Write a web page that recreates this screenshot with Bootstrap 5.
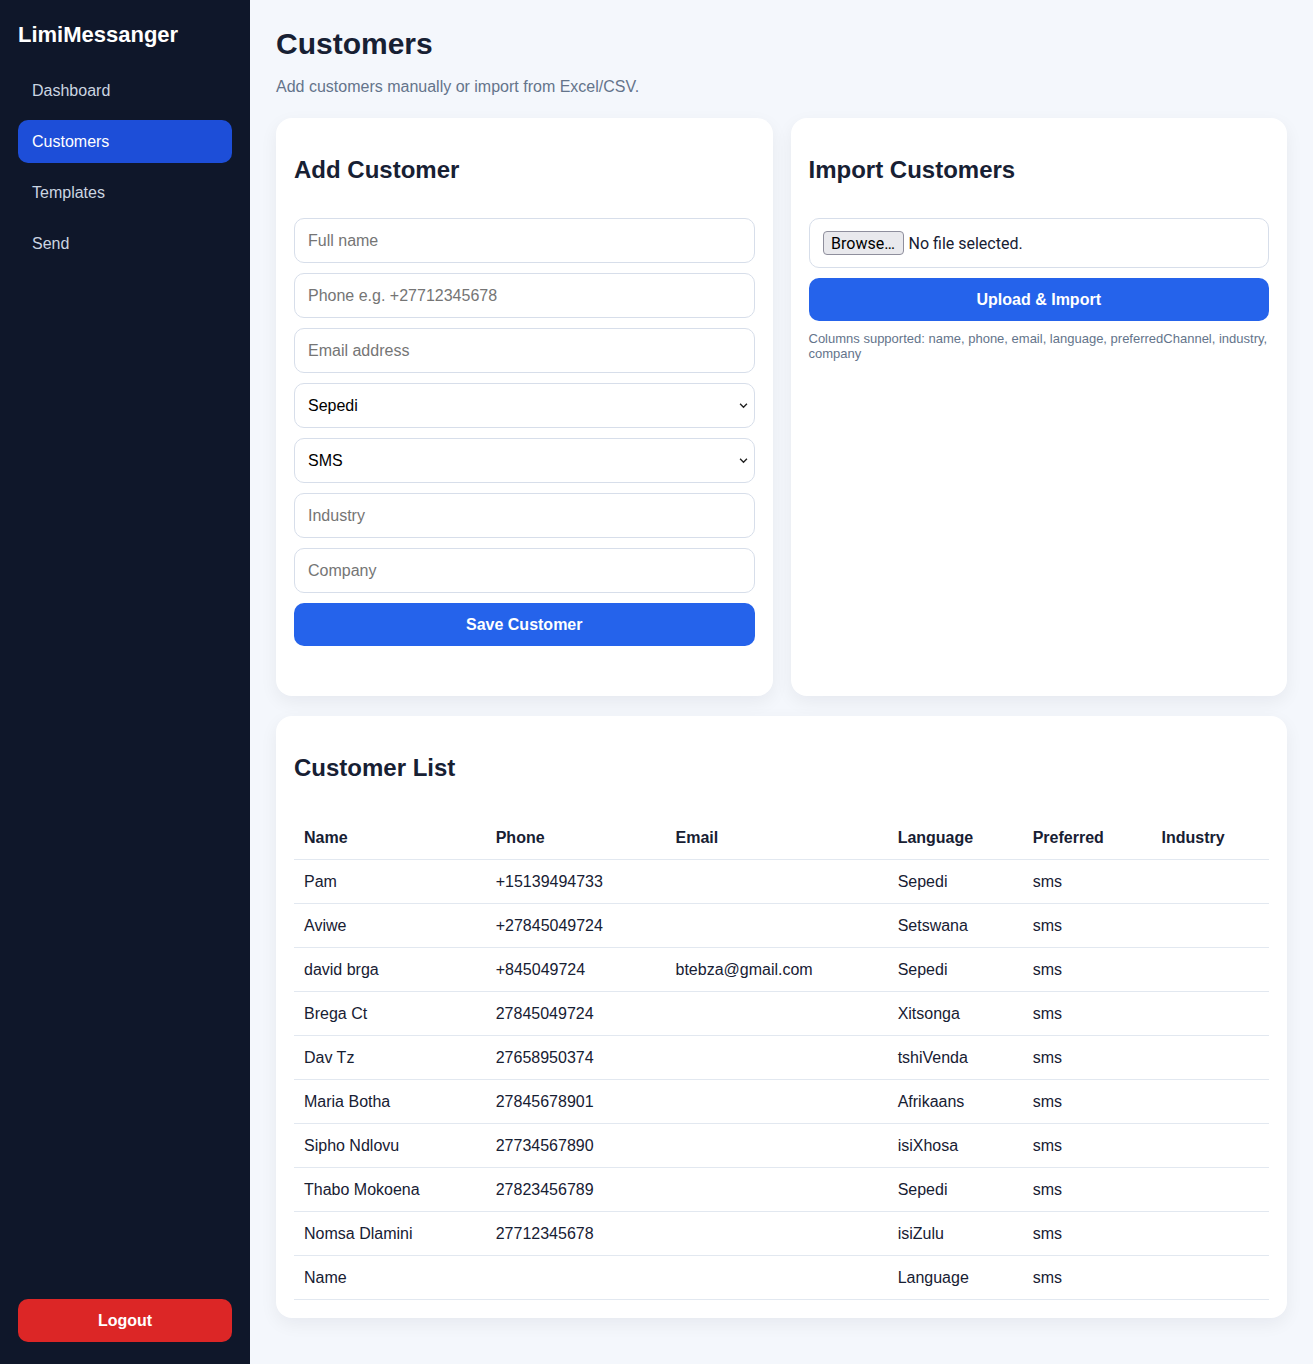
<!DOCTYPE html>
<html lang="en">
<head>
    <meta charset="UTF-8">
    <title>Customers - LimiMessanger</title>
    <link href="https://cdn.jsdelivr.net/npm/bootstrap@5.3.3/dist/css/bootstrap.min.css" rel="stylesheet">
    <style>
        body { background: #f4f7fc; color: #172033; font-family: "Liberation Sans", Arial, sans-serif; font-size: 16px; }
        .sidebar { width: 250px; flex: 0 0 250px; background: #0f172a; padding: 18px 18px 22px; min-height: 1364px; }
        .brand { color: #fff; font-size: 22px; font-weight: 700; line-height: 34px; margin-bottom: 17px; }
        .sidebar .nav { gap: 8px; }
        .sidebar .nav-link { color: #cbd5e1; padding: 0 14px; line-height: 43px; border-radius: 10px; }
        .sidebar .nav-link.active { background: #1d4ed8; color: #fff; }
        .btn-logout { background: #dc2626; color: #fff; font-weight: 700; height: 43px; padding: 0 12px; border: 0; border-radius: 10px; }
        .main { padding: 26px 26px 46px; min-width: 0; }
        .page-title { font-size: 30px; font-weight: 700; line-height: 36px; margin: 0 0 13px; color: #172033; }
        .page-sub { color: #64748b; line-height: 24px; margin-bottom: 19px; }
        .cards { --bs-gutter-x: 18px; --bs-gutter-y: 0; }
        .panel { background: #fff; border: 0; border-radius: 16px; padding: 18px; box-shadow: 0 6px 18px rgba(15, 23, 42, .06); }
        .panel-form { padding-bottom: 50px; }
        .panel-title { font-size: 24px; font-weight: 700; line-height: 28px; margin: 20px 0 34px; color: #172033; }
        .stack { gap: 10px; }
        .field { height: 45px; padding: 0 13px; border: 1px solid #d7deea; border-radius: 10px; font-size: 16px; color: #000; }
        .field::placeholder { color: #757575; }
        select.form-select.field {
            background-image: url("data:image/svg+xml,%3csvg xmlns='http://www.w3.org/2000/svg' viewBox='0 0 10 7'%3e%3cpath fill='none' stroke='%23222' stroke-width='1.6' d='M1 1l4 4 4-4'/%3e%3c/svg%3e");
            background-position: right 6px center;
            background-size: 9px 6px;
        }
        .file-field { height: 50px; padding: 0 13px; gap: 5px; border: 1px solid #d7deea; border-radius: 10px; background: #fff; font-family: Roboto, sans-serif; font-size: 16px; color: #172033; }
        .file-field span { padding-top: 2px; }
        .file-btn { height: 24px; line-height: 24px; margin: 0; width: 81px; text-align: center; background: #e9e9ed; border: 1px solid #8f8f9d; border-radius: 4px; color: #000; white-space: nowrap; }
        .btn-save { background: #2563eb; color: #fff; font-weight: 700; height: 43px; padding: 1px 12px 0; border: 0; border-radius: 10px; }
        .hint { color: #64748b; font-size: 13px; line-height: 15px; margin-top: 10px; }
        .list-panel { margin-top: 20px; }
        .list-panel .panel-title { margin-bottom: 33px; }
        .table { margin: 0; --bs-table-color: #172033; --bs-table-border-color: #e2e8f0; }
        .table th, .table td { padding: 2px 10px 0; height: 44px; vertical-align: middle; color: #172033; }
    </style>
</head>
<body>
    <div class="d-flex">
        <aside class="sidebar d-flex flex-column">
            <div class="brand">LimiMessanger</div>
            <nav class="nav flex-column">
                <a class="nav-link" href="#">Dashboard</a>
                <a class="nav-link active" href="#">Customers</a>
                <a class="nav-link" href="#">Templates</a>
                <a class="nav-link" href="#">Send</a>
            </nav>
            <button type="button" class="btn btn-logout w-100 mt-auto">Logout</button>
        </aside>

        <main class="main flex-grow-1">
            <h1 class="page-title">Customers</h1>
            <p class="page-sub">Add customers manually or import from Excel/CSV.</p>

            <div class="row cards">
                <div class="col-6">
                    <div class="panel panel-form h-100">
                        <h2 class="panel-title">Add Customer</h2>
                        <form class="d-grid stack">
                            <input type="text" class="form-control field" placeholder="Full name">
                            <input type="text" class="form-control field" placeholder="Phone e.g. +27712345678">
                            <input type="email" class="form-control field" placeholder="Email address">
                            <select class="form-select field"><option>Sepedi</option></select>
                            <select class="form-select field"><option>SMS</option></select>
                            <input type="text" class="form-control field" placeholder="Industry">
                            <input type="text" class="form-control field" placeholder="Company">
                            <button type="button" class="btn btn-save w-100">Save Customer</button>
                        </form>
                    </div>
                </div>
                <div class="col-6">
                    <div class="panel h-100">
                        <h2 class="panel-title">Import Customers</h2>
                        <form class="d-grid stack">
                            <div class="file-field d-flex align-items-center">
                                <input type="file" id="customerFile" class="d-none">
                                <label for="customerFile" class="file-btn">Browse…</label>
                                <span>No file selected.</span>
                            </div>
                            <button type="button" class="btn btn-save w-100">Upload &amp; Import</button>
                        </form>
                        <div class="hint">Columns supported: name, phone, email, language, preferredChannel, industry, company</div>
                    </div>
                </div>
            </div>

            <div class="panel list-panel">
                <h2 class="panel-title">Customer List</h2>
                <table class="table">
                    <thead>
                        <tr><th>Name</th><th>Phone</th><th>Email</th><th>Language</th><th>Preferred</th><th>Industry</th></tr>
                    </thead>
                    <tbody>
                        <tr><td>Pam</td><td>+15139494733</td><td></td><td>Sepedi</td><td>sms</td><td></td></tr>
                        <tr><td>Aviwe</td><td>+27845049724</td><td></td><td>Setswana</td><td>sms</td><td></td></tr>
                        <tr><td>david brga</td><td>+845049724</td><td>btebza@gmail.com</td><td>Sepedi</td><td>sms</td><td></td></tr>
                        <tr><td>Brega Ct</td><td>27845049724</td><td></td><td>Xitsonga</td><td>sms</td><td></td></tr>
                        <tr><td>Dav Tz</td><td>27658950374</td><td></td><td>tshiVenda</td><td>sms</td><td></td></tr>
                        <tr><td>Maria Botha</td><td>27845678901</td><td></td><td>Afrikaans</td><td>sms</td><td></td></tr>
                        <tr><td>Sipho Ndlovu</td><td>27734567890</td><td></td><td>isiXhosa</td><td>sms</td><td></td></tr>
                        <tr><td>Thabo Mokoena</td><td>27823456789</td><td></td><td>Sepedi</td><td>sms</td><td></td></tr>
                        <tr><td>Nomsa Dlamini</td><td>27712345678</td><td></td><td>isiZulu</td><td>sms</td><td></td></tr>
                        <tr><td>Name</td><td></td><td></td><td>Language</td><td>sms</td><td></td></tr>
                    </tbody>
                </table>
            </div>
        </main>
    </div>
    <script src="https://cdn.jsdelivr.net/npm/bootstrap@5.3.3/dist/js/bootstrap.bundle.min.js"></script>
</body>
</html>
